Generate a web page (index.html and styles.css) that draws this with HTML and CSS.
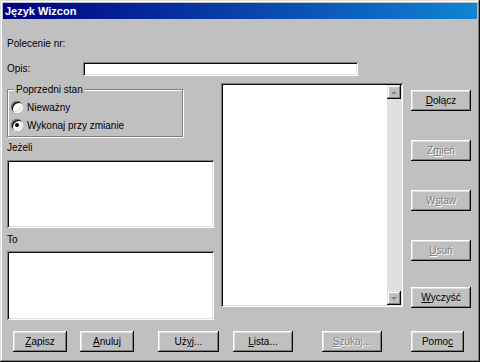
FILE: index.html
```html
<!DOCTYPE html>
<html>
<head>
    <meta charset="utf-8">
    <title>Język Wizcon</title>
    <link rel="stylesheet" href="styles.css">
</head>
<body>
    <div class="window">
        <div class="titleBar">Język Wizcon</div>
        <div class="content">
            <div class="labelRow">Polecenie nr:</div>
            <div class="opisRow">
                <span class="opisLabel">Opis:</span>
                <div class="field opisField"></div>
            </div>
            <div class="main">
                <div class="leftColumn">
                    <fieldset class="groupBox">
                        <legend>Poprzedni stan</legend>
                        <div class="radioRow"><span class="radio"></span>Nieważny</div>
                        <div class="radioRow"><span class="radio checked"></span>Wykonaj przy zmianie</div>
                    </fieldset>
                    <div class="caption">Jeżeli</div>
                    <div class="field memo memoIf"></div>
                    <div class="caption captionTo">To</div>
                    <div class="field memo memoThen"></div>
                </div>
                <div class="listBox">
                    <div class="listArea"></div>
                    <div class="scrollBar">
                        <div class="scrollButton"><span class="arrow arrowUp"></span></div>
                        <div class="scrollTrack"></div>
                        <div class="scrollButton"><span class="arrow arrowDown"></span></div>
                    </div>
                </div>
                <div class="sideButtons">
                    <button class="winButton"><u>D</u>ołącz</button>
                    <button class="winButton disabled">Z<u>m</u>ień</button>
                    <button class="winButton disabled">W<u>s</u>taw</button>
                    <button class="winButton disabled"><u>U</u>suń</button>
                    <button class="winButton lastSide"><u>W</u>yczyść</button>
                </div>
            </div>
            <div class="bottomButtons">
                <button class="winButton btnZapisz"><u>Z</u>apisz</button>
                <button class="winButton btnAnuluj"><u>A</u>nuluj</button>
                <button class="winButton btnUzyj">Uż<u>y</u>j...</button>
                <button class="winButton btnLista"><u>L</u>ista...</button>
                <button class="winButton disabled btnSzukaj"><u>S</u>zukaj...</button>
                <button class="winButton btnPomoc">Pomo<u>c</u></button>
            </div>
        </div>
    </div>
</body>
</html>
```

FILE: styles.css
```css
body
{
    margin: 0;
    font-family: "Liberation Sans", Arial, sans-serif;
    font-size: 10px;
    color: #000;
}
.window
{
    width: 480px;
    height: 362px;
    box-sizing: border-box;
    padding: 3px;
    background: #c0c0c0;
    box-shadow: inset -1px -1px #0a0a0a, inset 1px 1px #dfdfdf, inset -2px -2px #808080, inset 2px 2px #fff;
}
.titleBar
{
    height: 16px;
    line-height: 16px;
    padding-left: 2px;
    background: linear-gradient(90deg, #000080, #1084d0);
    color: #fff;
    font-weight: bold;
    font-size: 11px;
}
.content
{
    padding-left: 4px;
}
.labelRow
{
    margin-top: 18px;
    line-height: 13px;
}
.opisRow
{
    display: flex;
    margin-top: 12px;
    height: 14px;
}
.opisLabel
{
    width: 76px;
    line-height: 14px;
}
.field
{
    background: #fff;
    box-shadow: inset 1px 1px #808080, inset -1px -1px #fff, inset 2px 2px #0a0a0a, inset -2px -2px #dfdfdf;
}
.opisField
{
    width: 275px;
    height: 14px;
}
.main
{
    display: flex;
    margin-top: 7px;
}
.leftColumn
{
    width: 207px;
}
.groupBox
{
    box-sizing: border-box;
    width: 176px;
    height: 54px;
    margin: 0;
    padding: 2px 3px 0 3px;
    border: 1px solid #808080;
    box-shadow: inset 1px 1px #fff, 1px 1px #fff;
}
.groupBox legend
{
    padding: 0 2px;
    margin-left: 3px;
    line-height: 13px;
    background: #c0c0c0;
}
.radioRow
{
    display: flex;
    align-items: center;
    height: 18px;
}
.radio
{
    width: 12px;
    height: 12px;
    margin-right: 4px;
    border-radius: 50%;
    background: #fff;
    box-shadow: inset 1px 1px #808080, inset -1px -1px #fff, inset 2px 2px #0a0a0a, inset -2px -2px #dfdfdf;
    position: relative;
}
.radio.checked::after
{
    content: "";
    position: absolute;
    left: 4px;
    top: 4px;
    width: 4px;
    height: 4px;
    border-radius: 50%;
    background: #000;
}
.caption
{
    margin-top: 4px;
    line-height: 13px;
}
.captionTo
{
    margin-top: 5px;
}
.memo
{
    width: 207px;
}
.memoIf
{
    margin-top: 6px;
    height: 68px;
}
.memoThen
{
    margin-top: 5px;
    height: 69px;
}
.listBox
{
    display: flex;
    box-sizing: border-box;
    width: 182px;
    height: 224px;
    margin-left: 7px;
    padding: 2px;
    background: #fff;
    box-shadow: inset 1px 1px #808080, inset -1px -1px #fff, inset 2px 2px #0a0a0a, inset -2px -2px #dfdfdf;
}
.listArea
{
    flex: 1;
}
.scrollBar
{
    display: flex;
    flex-direction: column;
    width: 14px;
    background: #e0e0e0;
}
.scrollTrack
{
    flex: 1;
}
.scrollButton
{
    display: flex;
    align-items: center;
    justify-content: center;
    height: 14px;
    background: #c0c0c0;
    box-shadow: inset -1px -1px #0a0a0a, inset 1px 1px #dfdfdf, inset -2px -2px #808080, inset 2px 2px #fff;
}
.arrow
{
    width: 0;
    height: 0;
    border-left: 3px solid transparent;
    border-right: 3px solid transparent;
}
.arrowUp
{
    border-bottom: 3px solid #808080;
}
.arrowDown
{
    border-top: 3px solid #808080;
}
.sideButtons
{
    display: flex;
    flex-direction: column;
    gap: 29px;
    margin-left: 8px;
    padding-top: 7px;
}
.winButton
{
    width: 60px;
    height: 21px;
    padding: 0;
    border: none;
    background: #c0c0c0;
    font-family: "Liberation Sans", Arial, sans-serif;
    font-size: 10px;
    color: #000;
    box-shadow: inset -1px -1px #0a0a0a, inset 1px 1px #fff, inset -2px -2px #808080, inset 2px 2px #dfdfdf;
}
.winButton.disabled
{
    color: #808080;
    text-shadow: 1px 1px 0 #fff;
}
.lastSide
{
    margin-top: -3px;
}
.bottomButtons
{
    display: flex;
    margin-top: 11px;
}
.btnZapisz
{
    margin-left: 6px;
    width: 54px;
}
.btnAnuluj
{
    margin-left: 13px;
    width: 54px;
}
.btnUzyj
{
    margin-left: 24px;
    width: 61px;
}
.btnLista
{
    margin-left: 14px;
}
.btnSzukaj
{
    margin-left: 29px;
}
.btnPomoc
{
    margin-left: 29px;
    width: 53px;
}
```
